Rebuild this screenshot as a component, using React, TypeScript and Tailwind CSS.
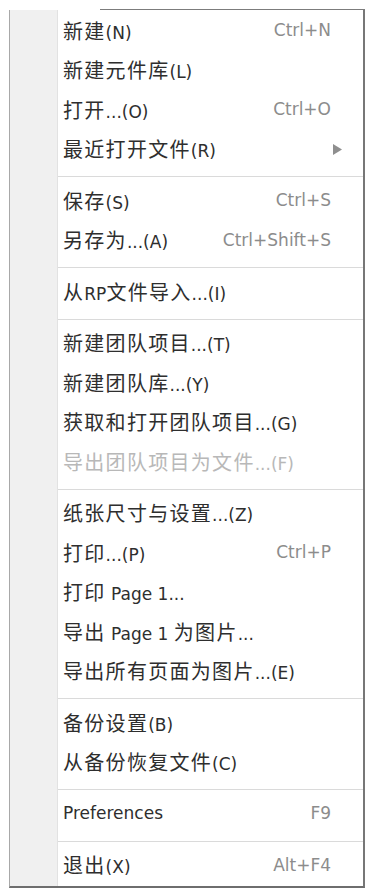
import React from "react";

type Item = { label: string; shortcut?: string; arrow?: boolean; disabled?: boolean };

const groups: Item[][] = [
  [
    { label: "新建(N)", shortcut: "Ctrl+N" },
    { label: "新建元件库(L)" },
    { label: "打开...(O)", shortcut: "Ctrl+O" },
    { label: "最近打开文件(R)", arrow: true },
  ],
  [
    { label: "保存(S)", shortcut: "Ctrl+S" },
    { label: "另存为...(A)", shortcut: "Ctrl+Shift+S" },
  ],
  [{ label: "从RP文件导入...(I)" }],
  [
    { label: "新建团队项目...(T)" },
    { label: "新建团队库...(Y)" },
    { label: "获取和打开团队项目...(G)" },
    { label: "导出团队项目为文件...(F)", disabled: true },
  ],
  [
    { label: "纸张尺寸与设置...(Z)" },
    { label: "打印...(P)", shortcut: "Ctrl+P" },
    { label: "打印 Page 1..." },
    { label: "导出 Page 1 为图片..." },
    { label: "导出所有页面为图片...(E)" },
  ],
  [{ label: "备份设置(B)" }, { label: "从备份恢复文件(C)" }],
  [{ label: "Preferences", shortcut: "F9" }],
  [{ label: "退出(X)", shortcut: "Alt+F4" }],
];

function Label({ text, disabled }: { text: string; disabled?: boolean }) {
  const parts = text.split(/([\u3000-\u9fff\uff00-\uffef]+)/).filter((p) => p.length > 0);
  return (
    <span className={disabled ? "text-[#b8b8b8]" : "text-[#2e2e2e]"}>
      {parts.map((p, i) =>
        /[\u3000-\u9fff\uff00-\uffef]/.test(p) ? (
          <span
            key={i}
            className="text-[20px] tracking-[1.3px] [font-family:'Noto_Sans_CJK_SC',sans-serif]"
          >
            {p}
          </span>
        ) : (
          <span key={i} className="text-[17px] whitespace-pre [font-family:'DejaVu_Sans',sans-serif]">
            {p}
          </span>
        )
      )}
    </span>
  );
}

function Row({ item }: { item: Item }) {
  return (
    <div className="flex h-[39.5px] items-center justify-between pl-[5px] pr-[21px]">
      <Label text={item.label} disabled={item.disabled} />
      {item.shortcut && (
        <span className="mr-[11px] text-[17px] text-[#8c8c8c] [font-family:'DejaVu_Sans',sans-serif]">
          {item.shortcut}
        </span>
      )}
      {item.arrow && (
        <svg width="9" height="11" viewBox="0 0 9 11" className="block shrink-0">
          <path d="M0 0 L9 5.5 L0 11 Z" fill="#8f8f8f" />
        </svg>
      )}
    </div>
  );
}

export default function App() {
  return (
    <div className="min-h-[894px] bg-white pl-[9px] pt-[9px]">
      <div className="flex w-[356px] flex-col">
        <div className="flex h-px">
          <div className="w-[91px]" />
          <div className="flex-1 bg-[#7c7c7c]" />
        </div>
        <div className="flex border-b-2 border-l border-r-2 border-b-[#6e6e6e] border-l-[#a8a8a8] border-r-[#777777]">
          <div className="w-[48px] shrink-0 border-r border-[#e2e2e2] bg-[#f0f0f0]" />
          <div className="flex flex-1 flex-col bg-white pt-[1px] pb-[1px]">
            {groups.map((g, gi) => (
              <React.Fragment key={gi}>
                {gi > 0 && <div className="mt-[7px] mb-[4px] h-px bg-[#dadada]" />}
                {g.map((it, ii) => (
                  <Row key={ii} item={it} />
                ))}
              </React.Fragment>
            ))}
          </div>
        </div>
      </div>
    </div>
  );
}
